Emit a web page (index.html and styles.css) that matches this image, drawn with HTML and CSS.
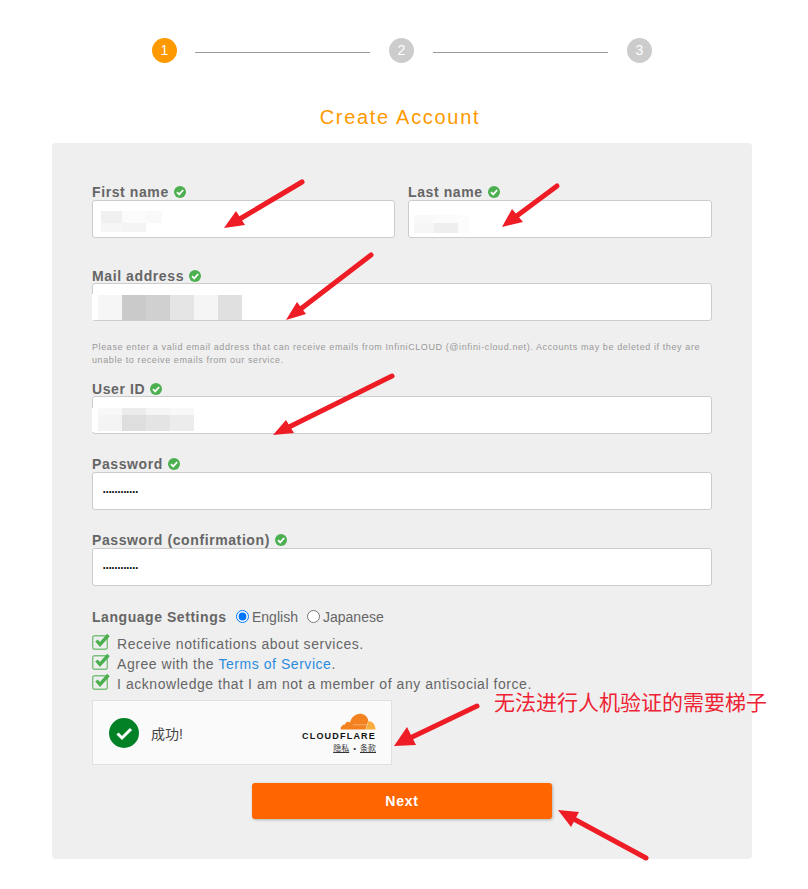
FILE: index.html
```html
<!DOCTYPE html>
<html>
<head>
    <title>Create Account</title>
    <link rel="stylesheet" href="styles.css">
</head>
<body>
    <div class="container">
        <div class="steps">
            <div class="step active">1</div>
            <div class="step-line"></div>
            <div class="step">2</div>
            <div class="step-line"></div>
            <div class="step">3</div>
        </div>
        <h1>Create Account</h1>

        <form class="card">
            <div class="name-row">
                <div class="field">
                    <label class="field-label">First name<svg class="ok" viewBox="0 0 12 12"><circle cx="6" cy="6" r="6"/><path d="M3 6.2l2.2 2.2L9.2 4"/></svg></label>
                    <input type="text">
                </div>
                <div class="field">
                    <label class="field-label">Last name<svg class="ok" viewBox="0 0 12 12"><circle cx="6" cy="6" r="6"/><path d="M3 6.2l2.2 2.2L9.2 4"/></svg></label>
                    <input type="text">
                </div>
            </div>

            <div class="field mail">
                <label class="field-label">Mail address<svg class="ok" viewBox="0 0 12 12"><circle cx="6" cy="6" r="6"/><path d="M3 6.2l2.2 2.2L9.2 4"/></svg></label>
                <input type="text">
            </div>
            <p class="note">Please enter a valid email address that can receive emails from InfiniCLOUD (@infini-cloud.net). Accounts may be deleted if they are unable to receive emails from our service.</p>

            <div class="field userid">
                <label class="field-label">User ID<svg class="ok" viewBox="0 0 12 12"><circle cx="6" cy="6" r="6"/><path d="M3 6.2l2.2 2.2L9.2 4"/></svg></label>
                <input type="text">
            </div>
            <div class="field pass">
                <label class="field-label">Password<svg class="ok" viewBox="0 0 12 12"><circle cx="6" cy="6" r="6"/><path d="M3 6.2l2.2 2.2L9.2 4"/></svg></label>
                <input type="password" value="123456789012">
            </div>
            <div class="field pass">
                <label class="field-label">Password (confirmation)<svg class="ok" viewBox="0 0 12 12"><circle cx="6" cy="6" r="6"/><path d="M3 6.2l2.2 2.2L9.2 4"/></svg></label>
                <input type="password" value="123456789012">
            </div>

            <div class="lang">
                <span class="lang-title">Language Settings</span>
                <label class="lang-option"><input type="radio" name="lang" checked>English</label>
                <label class="lang-option"><input type="radio" name="lang">Japanese</label>
            </div>

            <div class="agree">
                <div class="agree-row">
                    <svg class="tick" viewBox="0 0 18 17"><rect x="0.7" y="2.7" width="14.6" height="13.6" rx="2"/><path d="M4.500 7.500l3.500 4L16.500 2"/></svg>
                    <span>Receive notifications about services.</span>
                </div>
                <div class="agree-row">
                    <svg class="tick" viewBox="0 0 18 17"><rect x="0.7" y="2.7" width="14.6" height="13.6" rx="2"/><path d="M4.500 7.500l3.500 4L16.500 2"/></svg>
                    <span>Agree with the <a href="#">Terms of Service</a>.</span>
                </div>
                <div class="agree-row">
                    <svg class="tick" viewBox="0 0 18 17"><rect x="0.7" y="2.7" width="14.6" height="13.6" rx="2"/><path d="M4.500 7.500l3.500 4L16.500 2"/></svg>
                    <span>I acknowledge that I am not a member of any antisocial force.</span>
                </div>
            </div>

            <div class="turnstile">
                <svg class="ts-check" viewBox="0 0 30 30"><circle cx="15" cy="15" r="15"/><path d="M8.500 15.500l4.500 4.500 9-9"/></svg>
                <span class="ts-text">成功!</span>
                <div class="cf">
                    <svg class="cf-cloud" viewBox="0 0 36 17">
                        <path fill="#f48120" d="M.5 16.500C.5 13.500 2.500 11.500 5 11.500 5.500 9 8 8 10 9.500 11 4.500 15.500.8 20 .8c4 0 7.500 2.700 8.300 6.700-.8 3-1.800 6-2.800 9z"/>
                        <path fill="#faad3f" d="M26 16.500c1-3 1.500-6 2.500-8.500 4 0 7 4 7 8.500z"/>
                        <path class="cf-streak" d="M13 11.800h14"/>
                    </svg>
                    <div class="cf-name">CLOUDFLARE</div>
                    <div class="cf-links"><a href="#">隐私</a><span>•</span><a href="#">条款</a></div>
                </div>
            </div>

            <button type="button" class="next">Next</button>
        </form>
    </div>

    <!-- скриншот: размытые куски и стрелки поверх формы -->
    <svg class="overlay" width="808" height="889" viewBox="0 0 808 889">
        <g shape-rendering="crispEdges">
            <rect x="101" y="211" width="21" height="12" fill="#f0f0f0"/>
            <rect x="122" y="211" width="24" height="12" fill="#fbfbfb"/>
            <rect x="146" y="211" width="16" height="12" fill="#f9f9f9"/>
            <rect x="101" y="223" width="21" height="9" fill="#f6f6f6"/>
            <rect x="122" y="223" width="24" height="9" fill="#f4f4f4"/>

            <rect x="414" y="215" width="20" height="8" fill="#f9f9f9"/>
            <rect x="434" y="215" width="24" height="8" fill="#fbfbfb"/>
            <rect x="458" y="215" width="11" height="18" fill="#fcfcfc"/>
            <rect x="414" y="223" width="20" height="10" fill="#f6f6f6"/>
            <rect x="434" y="223" width="24" height="10" fill="#eeeeee"/>

            <rect x="92" y="294" width="158" height="26" fill="#fff"/>
            <rect x="98" y="295" width="24" height="25" fill="#f6f6f6"/>
            <rect x="122" y="295" width="24" height="25" fill="#cacaca"/>
            <rect x="146" y="295" width="24" height="25" fill="#d0d0d0"/>
            <rect x="170" y="295" width="24" height="25" fill="#e5e5e5"/>
            <rect x="194" y="295" width="24" height="25" fill="#f5f5f5"/>
            <rect x="218" y="295" width="24" height="25" fill="#e0e0e0"/>

            <rect x="92" y="408" width="102" height="24" fill="#fff"/>
            <rect x="98" y="408" width="24" height="7" fill="#f8f8f8"/>
            <rect x="122" y="408" width="24" height="7" fill="#ececec"/>
            <rect x="146" y="408" width="24" height="7" fill="#f5f5f5"/>
            <rect x="170" y="408" width="24" height="7" fill="#f8f8f8"/>
            <rect x="98" y="415" width="24" height="16" fill="#f4f4f4"/>
            <rect x="122" y="415" width="24" height="16" fill="#dedede"/>
            <rect x="146" y="415" width="24" height="16" fill="#e4e4e4"/>
            <rect x="170" y="415" width="24" height="16" fill="#ececec"/>
        </g>
        <g class="arrow">
            <path d="M302 182L238 220"/><polygon points="224,228 236,211 245,225"/>
            <path d="M557 186L514 218"/><polygon points="502,227 512,209 523,222"/>
            <path d="M371 255L298 311"/><polygon points="286,320 297,302 306,314"/>
            <path d="M392 376L287 428"/><polygon points="273,435 286,420 294,433"/>
            <path d="M477 706L408 739"/><polygon points="394,746 407,727 416,745"/>
            <path d="M646 858L572 818"/><polygon points="558,810 579,812 571,827"/>
        </g>
    </svg>
    <div class="note-red">无法进行人机验证的需要梯子</div>
</body>
</html>
```

FILE: styles.css
```css
body {
    margin: 0;
    padding: 38px 0 30px;
    position: relative;
    background: #fff;
    font-family: "Liberation Sans", "Noto Sans CJK SC", sans-serif;
    color: #666;
}

.container {
    width: 700px;
    margin-left: 52px;
}

/* Шаги */
.steps {
    display: flex;
    align-items: flex-start;
    padding-left: 100px;
}

.step {
    width: 25px;
    height: 25px;
    border-radius: 50%;
    background: #ccc;
    color: #fff;
    font-size: 14px;
    line-height: 25px;
    text-align: center;
}

.step.active {
    background: #ff9900;
}

.step-line {
    width: 175px;
    height: 1px;
    margin: 14px 19px 0;
    background: #999;
}

.active + .step-line {
    margin-left: 18px;
}

h1 {
    margin: 42px 4px 14px 0;
    color: #ff9900;
    font-size: 20px;
    font-weight: normal;
    line-height: 24px;
    letter-spacing: 1.7px;
    text-align: center;
}

/* Форма */
.card {
    padding: 41px 40px 40px;
    border-radius: 4px;
    background: #efefef;
}

.name-row {
    display: grid;
    grid-template-columns: 303px 304px;
    gap: 13px;
}

.field-label {
    display: flex;
    align-items: center;
    gap: 5px;
    height: 16px;
    font-size: 14px;
    font-weight: bold;
    letter-spacing: 0.6px;
}

.ok {
    width: 12px;
    height: 12px;
    flex: none;
}

.ok circle {
    fill: #4caf50;
}

.ok path {
    fill: none;
    stroke: #fff;
    stroke-width: 1.8;
}

.field input {
    display: block;
    width: 100%;
    height: 38px;
    box-sizing: border-box;
    padding: 0 10px;
    border: 1px solid #ccc;
    border-radius: 3px;
    background: #fff;
    font-size: 7px;
    letter-spacing: 0.5px;
    outline: none;
}

.mail {
    margin-top: 29px;
}

.mail .field-label,
.userid .field-label {
    position: relative;
    top: 1px;
}

.note {
    margin: 20px 0 13px;
    color: #999;
    font-size: 9px;
    line-height: 13px;
    letter-spacing: 0.6px;
}

.pass {
    margin-top: 22px;
}

.lang {
    display: flex;
    align-items: center;
    height: 16px;
    margin-top: 23px;
    font-size: 14px;
}

.lang-title {
    width: 144px;
    font-weight: bold;
    letter-spacing: 0.55px;
}

.lang-option {
    display: flex;
    align-items: center;
    width: 71px;
}

.lang-option input {
    width: 13px;
    height: 13px;
    margin: 0 3px 2px 0;
}

.agree {
    margin-top: 8px;
    font-size: 14px;
}

.agree-row {
    display: flex;
    align-items: center;
    gap: 7px;
    height: 20px;
    letter-spacing: 0.55px;
    white-space: nowrap;
}

.agree-row span {
    margin-top: 2px;
}

.agree-row a {
    color: #2b8ce0;
    text-decoration: none;
}

.tick {
    width: 18px;
    height: 17px;
    flex: none;
    margin-bottom: 4px;
}

.tick rect {
    fill: none;
    stroke: #7cc07f;
    stroke-width: 1.4;
}

.tick path {
    fill: none;
    stroke: #4caf50;
    stroke-width: 3.4;
}

/* Виджет Cloudflare */
.turnstile {
    display: flex;
    align-items: center;
    width: 300px;
    height: 65px;
    box-sizing: border-box;
    margin-top: 7px;
    padding: 0 15px 0 16px;
    border: 1px solid #e0e0e0;
    background: #fafafa;
}

.ts-check {
    width: 30px;
    height: 30px;
    flex: none;
}

.ts-check circle {
    fill: #038127;
}

.ts-check path {
    fill: none;
    stroke: #fff;
    stroke-width: 3;
}

.ts-text {
    margin-left: 12px;
    color: #444;
    font-size: 14px;
}

.cf {
    display: flex;
    flex-direction: column;
    align-items: flex-end;
    margin-left: auto;
    padding-top: 3px;
}

.cf-cloud {
    width: 36px;
    height: 17px;
    margin: -1px 0 1px;
}

.cf-streak {
    stroke: #fff;
    stroke-width: 0.5;
    opacity: 0.7;
}

.cf-name {
    color: #111;
    font-size: 9px;
    font-weight: bold;
    line-height: 10px;
    letter-spacing: 1.2px;
}

.cf-links {
    display: flex;
    gap: 4px;
    margin-top: 2px;
    color: #333;
    font-size: 8px;
    line-height: 12px;
}

.cf-links a {
    color: #333;
}

.next {
    display: block;
    width: 300px;
    height: 36px;
    margin: 18px 0 0 160px;
    border: 0;
    border-radius: 3px;
    background: #ff6600;
    box-shadow: 1px 1px 3px rgba(0, 0, 0, 0.25);
    color: #fff;
    font-family: inherit;
    font-size: 14px;
    font-weight: bold;
    letter-spacing: 0.8px;
}

/* Пометки на скриншоте */
.overlay {
    position: absolute;
    top: 0;
    left: 0;
    pointer-events: none;
}

.arrow path {
    fill: none;
    stroke: #ee1c25;
    stroke-width: 5;
    stroke-linecap: round;
}

.arrow polygon {
    fill: #ee1c25;
}

.note-red {
    position: absolute;
    top: 686px;
    left: 494px;
    color: #ee2233;
    font-family: "Noto Sans CJK SC", sans-serif;
    font-size: 21px;
    line-height: 30px;
    white-space: nowrap;
}
```
